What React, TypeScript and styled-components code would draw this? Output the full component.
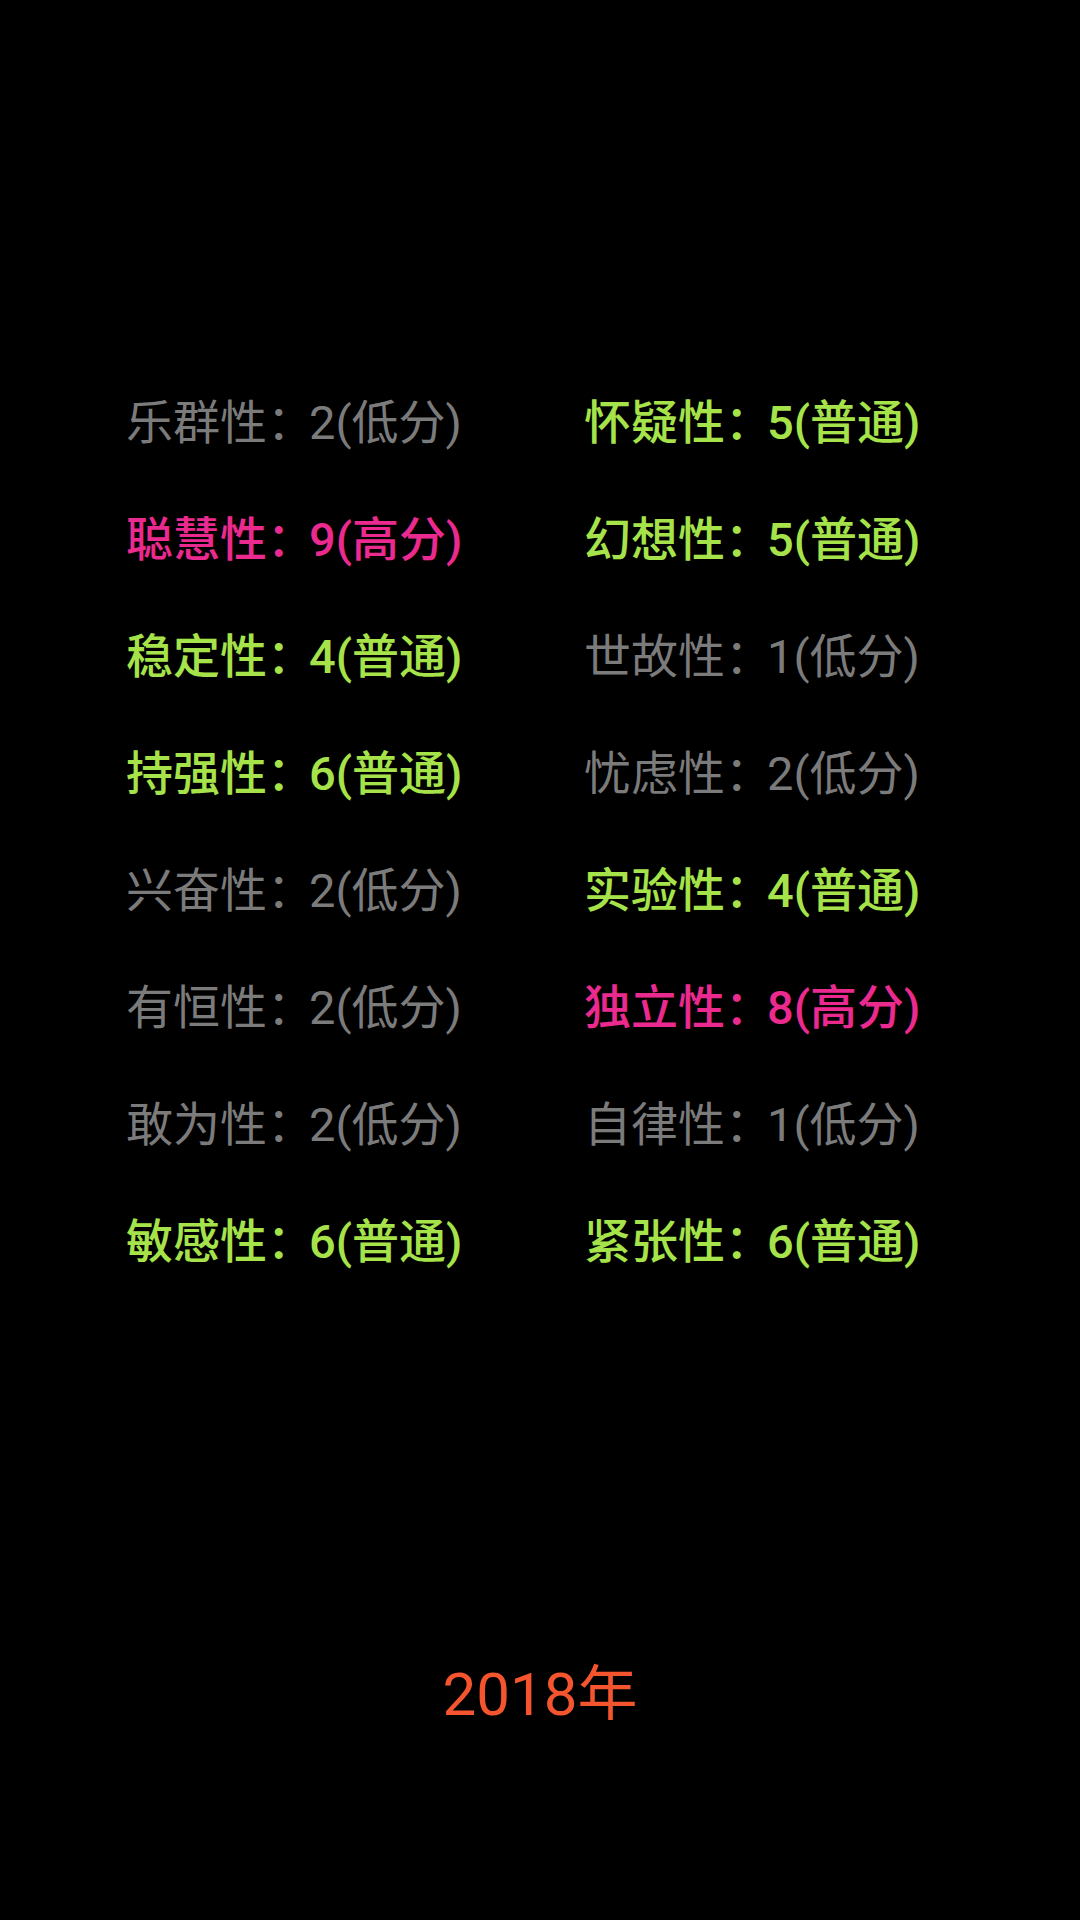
import React from "react";
import styled, { createGlobalStyle } from "styled-components";

const GlobalStyle = createGlobalStyle`
  html, body {
    margin: 0;
    padding: 0;
    background: #000;
  }
  body {
    font-family: Roboto, "Noto Sans CJK SC", sans-serif;
  }
`;

type Level = "low" | "normal" | "high";

const colors: Record<Level, string> = {
  low: "#7b7b7b",
  normal: "#a6e34a",
  high: "#ea2a8e",
};

const Page = styled.div`
  width: 1080px;
  min-height: 1920px;
  background: #000;
  display: flex;
  flex-direction: column;
  box-sizing: border-box;
  padding-top: 364px;
`;

const Grid = styled.div`
  display: grid;
  grid-template-columns: 458px auto;
  grid-auto-rows: 117px;
  padding-left: 126px;
`;

const Trait = styled.div<{ $level: Level }>`
  font-size: 47px;
  line-height: 117px;
  white-space: nowrap;
  color: ${(p) => colors[p.$level]};
  font-weight: ${(p) => (p.$level === "low" ? 400 : 500)};
`;

const Colon = styled.span`
  letter-spacing: -5px;
`;

const Year = styled.div`
  margin-top: 353px;
  text-align: center;
  font-size: 60px;
  line-height: 84px;
  color: #f4552e;
  font-family: Roboto, "Noto Sans CJK SC", sans-serif;
`;

const labelOf: Record<Level, string> = {
  low: "低分",
  normal: "普通",
  high: "高分",
};

const traits: Array<[string, number, Level]> = [
  ["乐群性", 2, "low"],
  ["怀疑性", 5, "normal"],
  ["聪慧性", 9, "high"],
  ["幻想性", 5, "normal"],
  ["稳定性", 4, "normal"],
  ["世故性", 1, "low"],
  ["持强性", 6, "normal"],
  ["忧虑性", 2, "low"],
  ["兴奋性", 2, "low"],
  ["实验性", 4, "normal"],
  ["有恒性", 2, "low"],
  ["独立性", 8, "high"],
  ["敢为性", 2, "low"],
  ["自律性", 1, "low"],
  ["敏感性", 6, "normal"],
  ["紧张性", 6, "normal"],
];

export default function App() {
  return (
    <>
      <GlobalStyle />
      <Page>
        <Grid>
          {traits.map(([name, score, level]) => (
            <Trait key={name} $level={level}>
              {name}
              <Colon>：</Colon>
              {score}({labelOf[level]})
            </Trait>
          ))}
        </Grid>
        <Year>2018年</Year>
      </Page>
    </>
  );
}
